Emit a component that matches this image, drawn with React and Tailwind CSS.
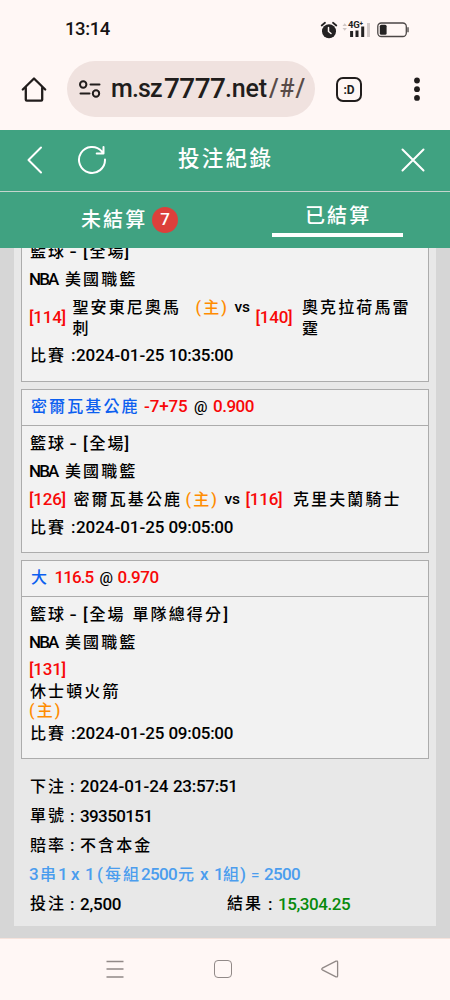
import React from "react";

const LATIN = "[font-family:Roboto,'Noto_Sans_CJK_TC',sans-serif]";

/* Chinese run: fixed advance of about 18px per character */
function C({ w, className = "", children }) {
  return (
    <span className={`shrink-0 whitespace-nowrap text-[16px] font-medium tracking-[2.1px] ${w} ${className}`}>
      {children}
    </span>
  );
}

/* Latin and digit run */
function L({ w, t = "tracking-[-0.65px]", className = "", children }) {
  return (
    <span className={`shrink-0 whitespace-nowrap text-[17px] font-medium ${t} ${w} ${className}`}>
      {children}
    </span>
  );
}

function Row({ className = "h-7", children }) {
  return <div className={`flex items-center ${className}`}>{children}</div>;
}

function League() {
  return (
    <Row>
      <L w="w-[36px]" t="tracking-[-1.9px]">NBA</L>
      <C w="w-[80px]">美國職籃</C>
    </Row>
  );
}

function Sport({ children }) {
  return (
    <Row>
      <C w="w-[42px]" className="pl-px">籃球</C>
      <L w="w-[12px]" className="scale-x-125">-</L>
      {children}
    </Row>
  );
}

function FullGame() {
  return (
    <Sport>
      <L w="w-[6.5px]">[</L>
      <C w="w-[35px]">全場</C>
      <L w="w-[6px]">]</L>
    </Sport>
  );
}

function GameTime({ date, time }) {
  return (
    <Row>
      <C w="w-[42px]" className="pl-px">比賽</C>
      <L w="w-[5px]">:</L>
      <L w="w-[92.5px]" t="tracking-[-0.05px]">{date}</L>
      <L w="w-[64px]" t="tracking-[-0.3px]">{time}</L>
    </Row>
  );
}

function Card({ title, className = "", children }) {
  return (
    <section className={`border-[1.5px] border-[#acacac] bg-[#f2f2f2] ${className}`}>
      {title && (
        <div className="flex h-9 items-center border-b border-[#acacac] pl-[9px]">{title}</div>
      )}
      <div className="pt-1 pl-[7px]">{children}</div>
    </section>
  );
}

function StatusBar() {
  return (
    <div className="flex h-[60px] items-center pl-[65px]">
      <span className="w-[255px] text-[18.5px] font-medium tracking-[-0.4px] text-[#171313]">13:14</span>
      <svg width="18" height="18" viewBox="0 0 18 18" className="shrink-0">
        <circle cx="9" cy="10.2" r="7" fill="#242222" />
        <path d="M1.7 4.5 5 1.8M16.3 4.5 13 1.8" stroke="#242222" strokeWidth="1.8" strokeLinecap="round" />
        <path d="M8.5 6.5v4l2.5 2" stroke="#fff7f5" strokeWidth="1.5" fill="none" strokeLinecap="round" />
      </svg>
      <div className="relative ml-1 h-[18px] w-[29px] shrink-0">
        <svg width="29" height="18" viewBox="0 0 29 18">
          <path d="m.5 5 2.2-2.8L4.9 5ZM.5 7l2.2 2.8L4.900 7Z" fill="#cfc6c4" />
          <path d="M9.600 10v6M15 9.500V16M20.700 5.500V16" stroke="#242222" strokeWidth="3" />
          <path d="M26.500 2v14" stroke="#d3cac8" strokeWidth="3" />
        </svg>
        <span className="absolute top-0 left-[6px] text-[9.500px] leading-[8px] font-bold tracking-[-0.300px] text-[#242222]">4G⁺</span>
      </div>
      <svg width="34" height="18" viewBox="0 0 34 18" className="ml-[5px] shrink-0">
        <rect x="1.800" y="2" width="28.500" height="13.500" rx="3.500" fill="none" stroke="#4b4645" strokeWidth="1.300" />
        <rect x="3.800" y="3.800" width="6.800" height="10" rx="1.500" fill="#242222" />
        <path d="M32 6.200v5" stroke="#777170" strokeWidth="1.800" />
      </svg>
    </div>
  );
}

function BrowserBar() {
  return (
    <div className="flex h-[70px] items-start pt-px pl-[21px]">
      <svg width="26" height="28" viewBox="0 0 26 28" className="mt-[14px] shrink-0" fill="none" stroke="#211d1c" strokeWidth="2.300" strokeLinejoin="round" strokeLinecap="round">
        <path d="M1.800 14.500 13 3.500l11.200 11M4.800 12.500v12.200q0 1 1 1h14.400q1 0 1-1V12.500" />
      </svg>
      <div className="ml-5 flex h-14 w-[248px] shrink-0 items-center overflow-hidden rounded-full bg-[#f0e2df] pl-3 text-[#211d1c]">
        <svg width="22" height="20" viewBox="0 0 22 20" className="shrink-0" fill="none" stroke="#211d1c" strokeWidth="2">
          <circle cx="4.200" cy="5.500" r="3.200" />
          <circle cx="17" cy="14.500" r="3.200" />
          <path d="M11.500 5.500H20.500M1.500 14.500h9" strokeLinecap="round" />
        </svg>
        <span className="ml-[10px] w-[53px] shrink-0 text-[25px] font-medium tracking-[-0.900px]">m.sz</span>
        <span className="w-[61px] shrink-0 text-[28px] font-medium tracking-[-0.600px]">7777</span>
        <span className="w-[44px] shrink-0 text-[25px] font-medium tracking-[-0.200px]">.net</span>
        <span className="w-[36px] shrink-0 overflow-hidden whitespace-nowrap text-[25px] font-medium tracking-[0.800px] text-[#584b48]">/#/</span>
      </div>
      <div className="mt-4 ml-[21px] flex h-[25px] w-[26px] shrink-0 items-center justify-center rounded-[7px] border-[2.500px] border-[#211d1c] text-[12px] leading-none font-bold text-[#211d1c]">
        :D
      </div>
      <svg width="8" height="26" viewBox="0 0 8 26" className="mt-4 ml-[50.500px] shrink-0" fill="#211d1c">
        <circle cx="4" cy="3.500" r="2.900" />
        <circle cx="4" cy="12.200" r="2.900" />
        <circle cx="4" cy="20.900" r="2.900" />
      </svg>
    </div>
  );
}

function PageHeader() {
  return (
    <header className="shrink-0 bg-[#40a281] text-white">
      <div className="flex h-[62px] items-center border-b border-[#c5d5ce] pb-[2px] pl-[27px]">
        <svg width="16" height="28" viewBox="0 0 16 28" className="shrink-0" fill="none" stroke="white" strokeWidth="2" strokeLinecap="round" strokeLinejoin="round">
          <path d="M14 1.500 1.500 14 14 26.500" />
        </svg>
        <svg width="30" height="30" viewBox="0 0 30 30" className="ml-[34px] shrink-0" fill="none" stroke="white" strokeWidth="2" strokeLinecap="round" strokeLinejoin="round">
          <path d="M28 14.500A13 13 0 1 1 24.800 6.400L26 8M26.500 2v6.500h-6.800" />
        </svg>
        <h1 className="ml-[71px] w-[235px] text-[21.500px] font-medium tracking-[2.300px]">投注紀錄</h1>
        <svg width="24" height="24" viewBox="0 0 24 24" className="-ml-[12px] shrink-0" fill="none" stroke="white" strokeWidth="2" strokeLinecap="round">
          <path d="m1.500 1.500 21 21m0-21-21 21" />
        </svg>
      </div>
      <div className="flex h-14 items-center">
        <div className="flex w-[225px] items-center pl-[81px]">
          <span className="w-[71px] shrink-0 pb-px text-[20px] font-medium tracking-[2.100px]">未結算</span>
          <span className="flex size-[26px] shrink-0 items-center justify-center rounded-full bg-[#dc403b] text-[17px] font-medium">7</span>
        </div>
        <div className="ml-[47px] flex h-14 w-[131px] flex-col pt-[10px]">
          <span className="h-[31px] pl-[33px] text-[20px] leading-[29px] font-medium tracking-[2.100px] whitespace-nowrap">已結算</span>
          <span className="h-1 w-full bg-white" />
        </div>
      </div>
    </header>
  );
}

function Info({ label, children }) {
  return (
    <div className="flex h-[29.300px] items-center">
      <C w="w-[40px]">{label}</C>
      <L w="w-[10px]">:</L>
      {children}
    </div>
  );
}

export default function App() {
  return (
    <div className={`flex h-[1000px] w-[450px] flex-col overflow-hidden bg-[#fff7f5] text-black ${LATIN}`}>
      <StatusBar />
      <BrowserBar />
      <PageHeader />
      <main className="h-[690px] shrink-0 overflow-hidden bg-[#d6d6d6] px-[14px]">
        <div className="flex h-[678px] flex-col bg-[#e8e8e8] px-[7px]">
          <div className="flex h-[133.500px] shrink-0 flex-col justify-end overflow-hidden">
            <Card className="h-[148px] shrink-0 border-t-0">
              <FullGame />
              <League />
              <div className="flex h-12 items-center leading-[21px]">
                <L w="w-[43.500px]" className="text-[#f80808]" t="tracking-[-0.250px]">[114]</L>
                <C w="w-[123px]">聖安東尼奧馬<br />刺</C>
                <div className="flex h-[42px] items-start">
                  <C w="w-[39px]" className="text-[#ff8c00]">(主)</C>
                  <L w="w-[21px]" className="!text-[15.500px]" t="tracking-[-0.200px]">vs</L>
                </div>
                <L w="w-[46.500px]" className="text-[#f80808]" t="tracking-[-0.250px]">[140]</L>
                <C w="w-[110px]">奧克拉荷馬雷<br />霆</C>
              </div>
              <GameTime date="2024-01-25" time="10:35:00" />
            </Card>
          </div>

          <Card
            className="mt-[7px] h-[164px] shrink-0"
            title={
              <>
                <C w="w-[113px]" className="text-[#0c5ff0]">密爾瓦基公鹿</C>
                <L w="w-[50px]" className="text-[#f80808]" t="tracking-[-0.150px]">-7+75</L>
                <L w="w-[19px]" className="!text-[15px]">@</L>
                <L w="w-[45px]" className="text-[#f80808]" t="tracking-[-0.500px]">0.900</L>
              </>
            }
          >
            <FullGame />
            <League />
            <Row>
              <L w="w-[43.500px]" className="text-[#f80808]" t="tracking-[-0.250px]">[126]</L>
              <C w="w-[113px]" className="pl-px">密爾瓦基公鹿</C>
              <C w="w-[39px]" className="text-[#ff8c00]">(主)</C>
              <L w="w-[21px]" className="!text-[15.500px]" t="tracking-[-0.200px]">vs</L>
              <L w="w-[47.500px]" className="text-[#f80808]" t="tracking-[-0.250px]">[116]</L>
              <C w="w-[110px]">克里夫蘭騎士</C>
            </Row>
            <GameTime date="2024-01-25" time="09:05:00" />
          </Card>

          <Card
            className="mt-[7px] h-[199px] shrink-0"
            title={
              <>
                <C w="w-[23.500px]" className="text-[#0c5ff0]">大</C>
                <L w="w-[45px]" className="text-[#f80808]" t="tracking-[-0.900px]">116.5</L>
                <L w="w-[18px]" className="!text-[15px]">@</L>
                <L w="w-[45px]" className="text-[#f80808]" t="tracking-[-0.400px]">0.970</L>
              </>
            }
          >
            <Sport>
              <L w="w-[6.500px]">[</L>
              <C w="w-[43px]">全場</C>
              <C w="w-[91px]">單隊總得分</C>
              <L w="w-[6px]">]</L>
            </Sport>
            <League />
            <Row className="h-[26px]">
              <L w="w-[43px]" className="text-[#f80808]" t="tracking-[-0.250px]">[131]</L>
            </Row>
            <Row className="h-[18px]">
              <C w="w-[100px]" className="pl-px">休士頓火箭</C>
            </Row>
            <Row className="h-[21px]">
              <C w="w-[40px]" className="text-[#ff8c00]">(主)</C>
            </Row>
            <div className="-mt-[2px]">
              <GameTime date="2024-01-25" time="09:05:00" />
            </div>
          </Card>

          <div className="pt-[14px] pl-[9px]">
            <Info label="下注">
              <L w="w-[93px]" t="tracking-[-0.050px]">2024-01-24</L>
              <L w="w-[66px]" t="tracking-[-0.300px]">23:57:51</L>
            </Info>
            <Info label="單號">
              <L w="w-[80px]" t="tracking-[-0.600px]">39350151</L>
            </Info>
            <Info label="賠率">
              <C w="w-[80px]">不含本金</C>
            </Info>
            <div className="-ml-px flex h-[29.300px] items-center text-[#4b9dee]">
              <L w="w-[11px]">3</L>
              <C w="w-[18px]">串</C>
              <L w="w-[13px]">1</L>
              <L w="w-[14px]">x</L>
              <L w="w-[12px]">1</L>
              <L w="w-[8px]">(</L>
              <C w="w-[36px]">每組</C>
              <L w="w-[37px]">2500</L>
              <C w="w-[22px]">元</C>
              <L w="w-[14px]">x</L>
              <L w="w-[9px]">1</L>
              <C w="w-[17px]">組</C>
              <L w="w-[11px]">)</L>
              <L w="w-[13px]" className="!text-[15px]">=</L>
              <L w="w-[37px]">2500</L>
            </div>
            <Info label="投注">
              <L w="w-[147px]" t="tracking-[-0.250px]">2,500</L>
              <C w="w-[41px]">結果</C>
              <L w="w-[10px]">:</L>
              <L w="w-[72px]" className="text-[#078a0c]" t="tracking-[-0.450px]">15,304.25</L>
            </Info>
          </div>
        </div>
      </main>
      <nav className="flex h-[62px] shrink-0 items-center border-t border-[#f6e3dc] pb-[2px] pl-[106px]">
        <svg width="18" height="20" viewBox="0 0 18 20" className="shrink-0" stroke="#918987" strokeWidth="1.300">
          <path d="M.5 2.500h17M.5 10h17M.5 18h17" />
        </svg>
        <div className="ml-[90px] h-[18px] w-[18px] shrink-0 rounded-[4px] border-[1.500px] border-[#918987]" />
        <svg width="18" height="18" viewBox="0 0 18 18" className="ml-[89px] shrink-0" fill="none" stroke="#918987" strokeWidth="1.300" strokeLinejoin="round">
          <path d="M1.300 8.200 15 1.200q1.600-.6 1.600 1v13.600q0 1.600-1.600 1L1.300 9.800q-1.200-.8 0-1.600Z" />
        </svg>
      </nav>
    </div>
  );
}
